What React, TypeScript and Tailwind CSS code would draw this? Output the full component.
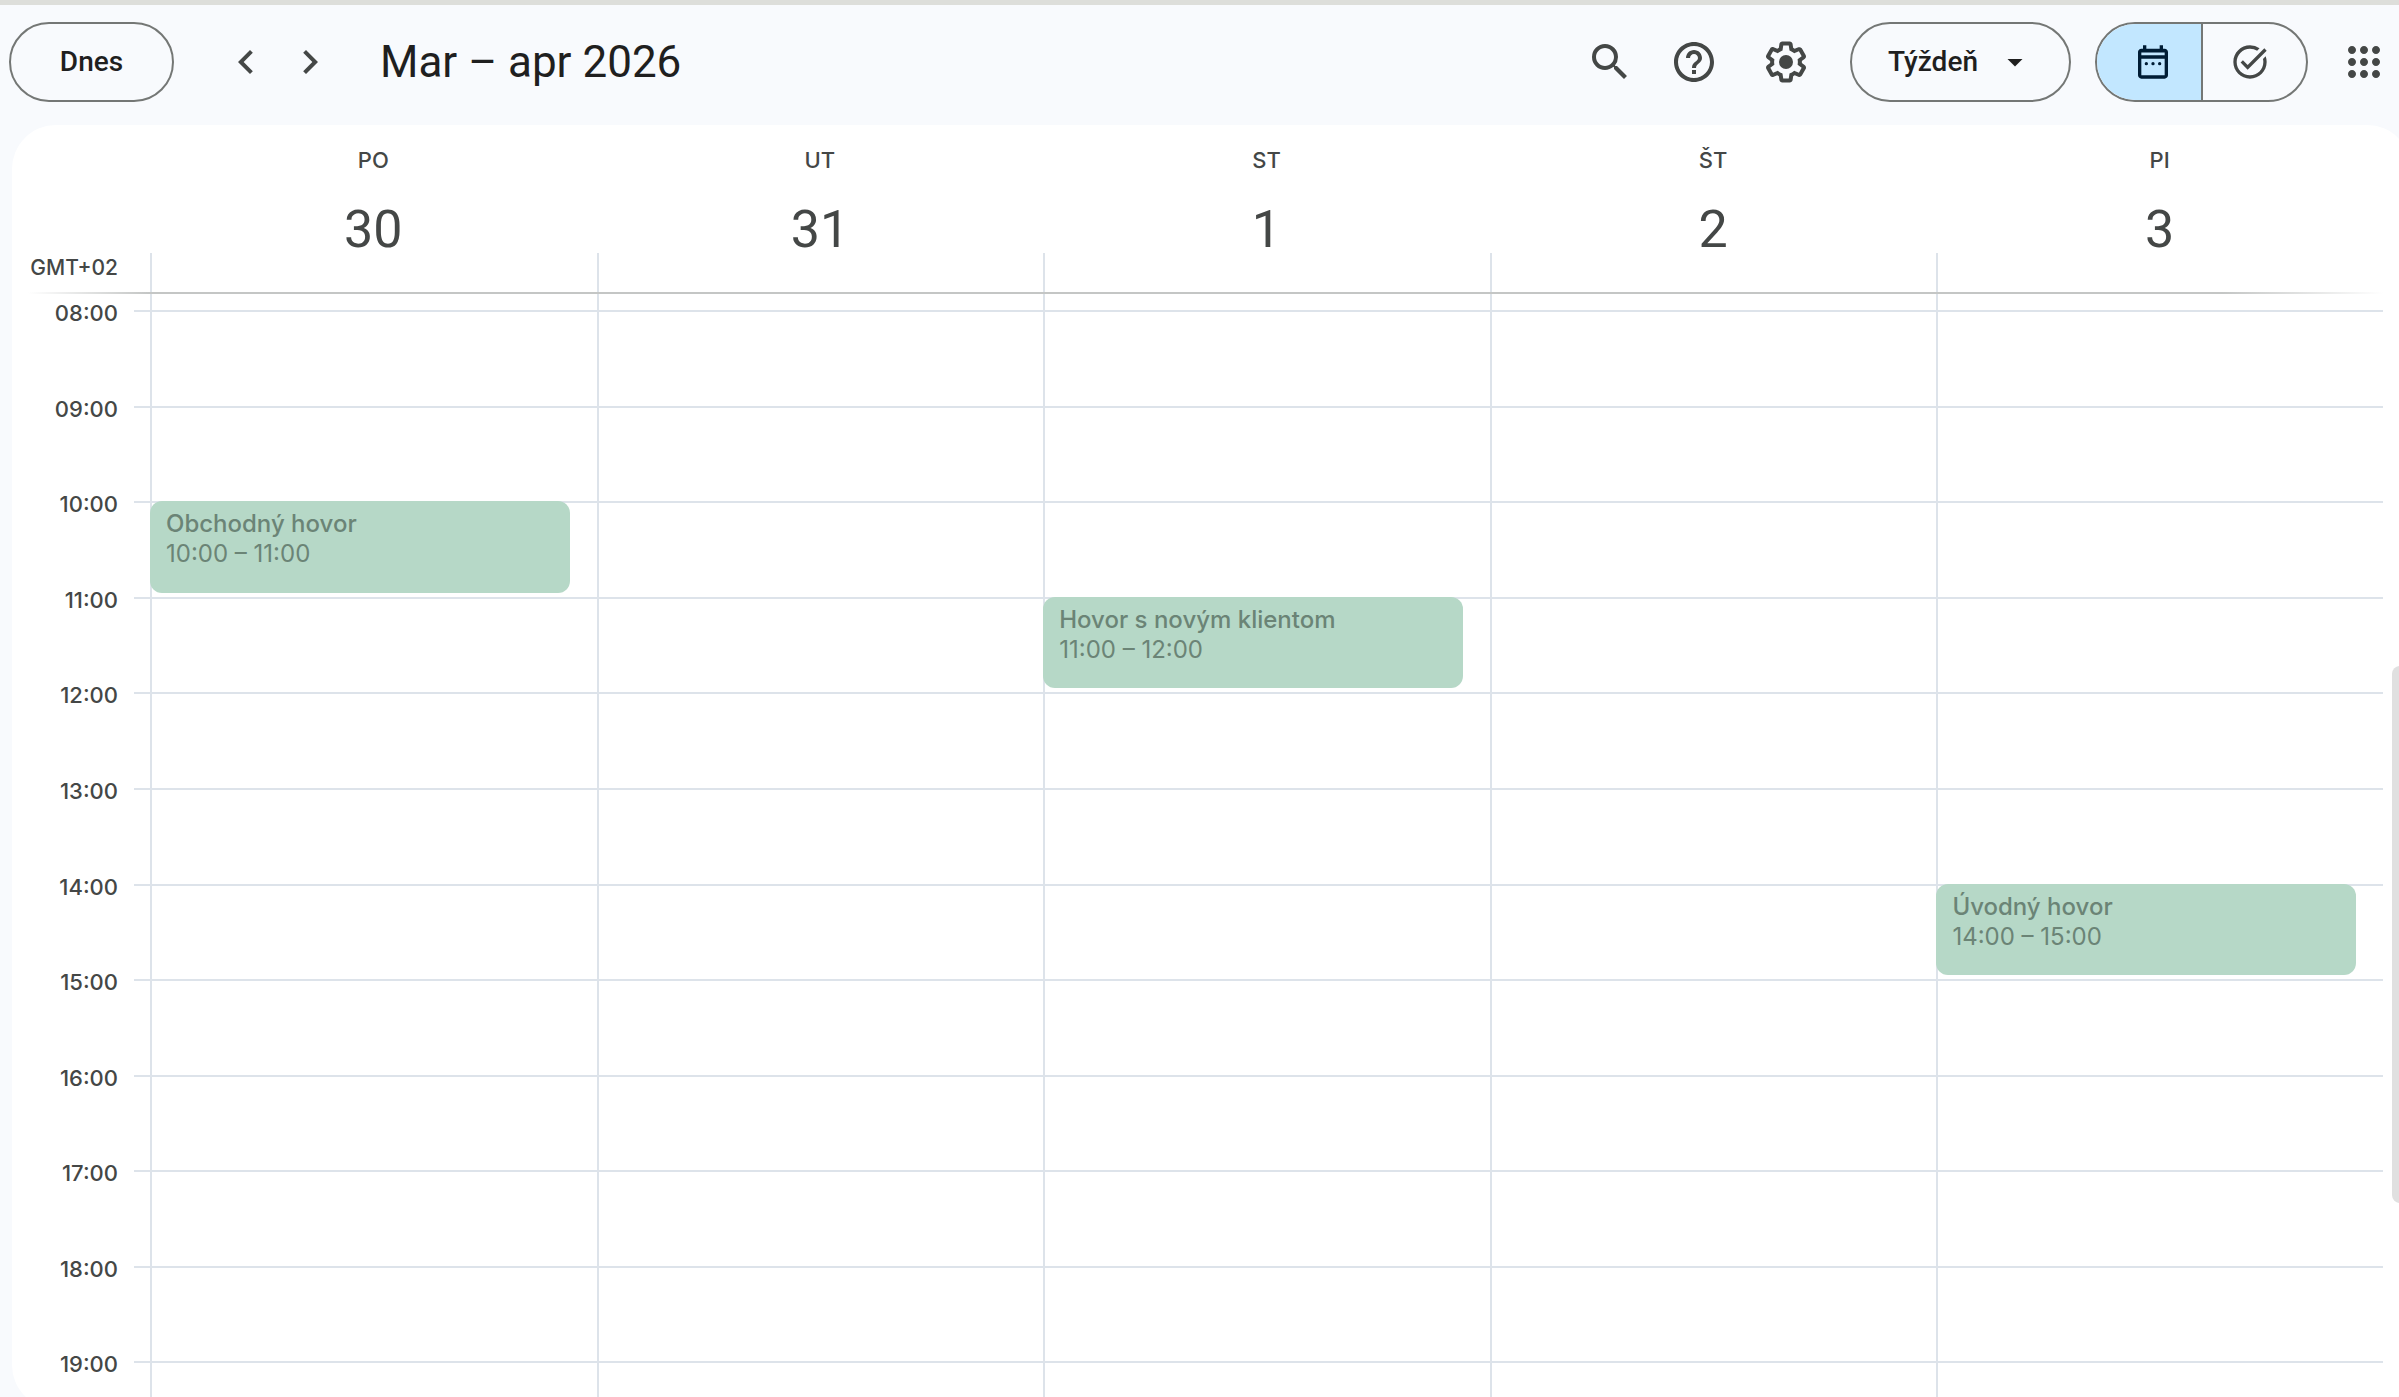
import React from 'react';

interface CalendarEvent {
  title: string;
  start: number;
  time: string;
}

interface Day {
  name: string;
  date: number;
  events: CalendarEvent[];
}

const HOURS = [8, 9, 10, 11, 12, 13, 14, 15, 16, 17, 18, 19];

const DAYS: Day[] = [
  {
    name: 'PO',
    date: 30,
    events: [{ title: 'Obchodný hovor', start: 10, time: '10:00 – 11:00' }],
  },
  { name: 'UT', date: 31, events: [] },
  {
    name: 'ST',
    date: 1,
    events: [{ title: 'Hovor s novým klientom', start: 11, time: '11:00 – 12:00' }],
  },
  { name: 'ŠT', date: 2, events: [] },
  {
    name: 'PI',
    date: 3,
    events: [{ title: 'Úvodný hovor', start: 14, time: '14:00 – 15:00' }],
  },
];

const ICONS = {
  prev: 'M15.41 7.41 14 6l-6 6 6 6 1.41-1.41L10.83 12z',
  next: 'M10 6 8.59 7.41 13.17 12l-4.58 4.59L10 18l6-6z',
  search:
    'M15.5 14h-.79l-.28-.27A6.471 6.471 0 0 0 16 9.5 6.5 6.5 0 1 0 9.5 16c1.61 0 3.09-.59 4.23-1.57l.27.28v.79l5 4.99L20.49 19l-4.99-5zm-6 0C7.01 14 5 11.99 5 9.5S7.01 5 9.5 5 14 7.01 14 9.5 11.99 14 9.5 14z',
  help:
    'M11 18h2v-2h-2v2zm1-16C6.48 2 2 6.48 2 12s4.48 10 10 10 10-4.48 10-10S17.52 2 12 2zm0 18c-4.41 0-8-3.59-8-8s3.59-8 8-8 8 3.59 8 8-3.59 8-8 8zm0-14c-2.21 0-4 1.79-4 4h2c0-1.1.9-2 2-2s2 .9 2 2c0 2-3 1.75-3 5h2c0-2.25 3-2.5 3-5 0-2.21-1.79-4-4-4z',
  settings:
    'M13.85 22.25h-3.7c-.74 0-1.36-.54-1.45-1.27l-.27-1.89c-.27-.14-.53-.29-.79-.46l-1.8.72c-.7.26-1.47-.03-1.81-.65L2.2 15.53c-.35-.66-.2-1.44.36-1.88l1.53-1.19c-.01-.15-.02-.3-.02-.46 0-.15.01-.31.02-.46l-1.52-1.19c-.59-.45-.74-1.26-.37-1.88l1.85-3.19c.34-.62 1.11-.9 1.79-.63l1.81.73c.26-.17.52-.32.78-.46l.27-1.91c.09-.7.71-1.25 1.44-1.25h3.7c.74 0 1.36.54 1.45 1.27l.27 1.89c.27.14.53.29.79.46l1.8-.72c.71-.26 1.48.03 1.82.65l1.84 3.18c.36.66.2 1.44-.36 1.88l-1.52 1.19c.01.15.02.3.02.46s-.01.31-.02.46l1.52 1.19c.56.45.72 1.23.37 1.86l-1.86 3.22c-.34.62-1.11.9-1.8.63l-1.8-.72c-.26.17-.52.32-.78.46l-.27 1.91c-.1.68-.72 1.22-1.46 1.22zm-3.23-2h2.76l.37-2.55.53-.22c.44-.18.88-.44 1.34-.78l.45-.34 2.38.96 1.38-2.4-2.03-1.58.07-.56c.03-.26.06-.51.06-.78s-.03-.53-.06-.78l-.07-.56 2.03-1.58-1.39-2.4-2.39.96-.45-.35c-.42-.32-.87-.58-1.33-.77l-.52-.22-.37-2.55h-2.76l-.37 2.55-.53.21c-.44.19-.88.44-1.34.79l-.45.33-2.38-.95-1.39 2.39 2.03 1.58-.07.56a7 7 0 0 0-.06.79c0 .26.02.53.06.78l.07.56-2.03 1.58 1.38 2.4 2.39-.96.45.35c.43.33.86.58 1.33.77l.53.22.38 2.55z M12 8.5a3.5 3.5 0 1 0 0 7 3.5 3.5 0 0 0 0-7z',
  calendar:
    'M19 4h-1V2h-2v2H8V2H6v2H5c-1.1 0-2 .9-2 2v14c0 1.1.9 2 2 2h14c1.1 0 2-.9 2-2V6c0-1.1-.9-2-2-2zm0 16H5V10h14v10zm0-12H5V6.3h14V8z M8 12a1 1 0 1 0 0 2 1 1 0 0 0 0-2z M12 12a1 1 0 1 0 0 2 1 1 0 0 0 0-2z M16 12a1 1 0 1 0 0 2 1 1 0 0 0 0-2z',
  tasks:
    'M22 5.18 10.59 16.6l-4.24-4.24 1.41-1.41 2.83 2.83 10-10L22 5.18zM19.79 10.22c.13.57.21 1.17.21 1.78 0 4.42-3.58 8-8 8s-8-3.58-8-8 3.58-8 8-8c1.58 0 3.04.46 4.28 1.25l1.44-1.44A9.9 9.9 0 0 0 12 2C6.48 2 2 6.48 2 12s4.48 10 10 10 10-4.48 10-10c0-1.19-.22-2.33-.6-3.39l-1.61 1.61z',
  apps:
    'M6 8c1.1 0 2-.9 2-2s-.9-2-2-2-2 .9-2 2 .9 2 2 2zm6 12c1.1 0 2-.9 2-2s-.9-2-2-2-2 .9-2 2 .9 2 2 2zm-6 0c1.1 0 2-.9 2-2s-.9-2-2-2-2 .9-2 2 .9 2 2 2zm0-6c1.1 0 2-.9 2-2s-.9-2-2-2-2 .9-2 2 .9 2 2 2zm6 0c1.1 0 2-.9 2-2s-.9-2-2-2-2 .9-2 2 .9 2 2 2zm4-8c0 1.1.9 2 2 2s2-.9 2-2-.9-2-2-2-2 .9-2 2zm-4 2c1.1 0 2-.9 2-2s-.9-2-2-2-2 .9-2 2 .9 2 2 2zm6 6c1.1 0 2-.9 2-2s-.9-2-2-2-2 .9-2 2 .9 2 2 2zm0 6c1.1 0 2-.9 2-2s-.9-2-2-2-2 .9-2 2 .9 2 2 2z',
  dropdown: 'm7 10 5 5 5-5z',
};

function Icon({ name, className }: { name: keyof typeof ICONS; className: string }) {
  return (
    <svg viewBox="0 0 24 24" fill="currentColor" className={className} aria-hidden="true">
      <path d={ICONS[name]} />
    </svg>
  );
}

function IconButton({
  name,
  label,
  className = '',
}: {
  name: keyof typeof ICONS;
  label: string;
  className?: string;
}) {
  return (
    <button type="button" aria-label={label} className={`shrink-0 text-[#444746] ${className}`}>
      <Icon name={name} className="size-12" />
    </button>
  );
}

function TopBar() {
  return (
    <header className="mb-[7px] flex h-[113px] shrink-0 items-center pl-[9px] pr-[11px] font-[Roboto,sans-serif]">
      <button
        type="button"
        className="h-20 w-[165px] shrink-0 rounded-full border-2 border-[#747775] text-[28px] font-medium text-[#1f1f1f]"
      >
        Dnes
      </button>
      <div className="ml-12 flex gap-4">
        <IconButton name="prev" label="Predchádzajúci týždeň" />
        <IconButton name="next" label="Nasledujúci týždeň" />
      </div>
      <h1 className="ml-[46px] whitespace-nowrap text-[44px] text-[#1f1f1f]">Mar – apr 2026</h1>

      <div className="ml-auto flex items-center">
        <IconButton name="search" label="Hľadať" className="mr-9" />
        <IconButton name="help" label="Pomocník" className="mr-11" />
        <IconButton name="settings" label="Nastavenia" className="mr-10" />

        <div className="relative mr-6 shrink-0">
          <select
            aria-label="Zobrazenie"
            defaultValue="week"
            className="h-20 w-[221px] appearance-none rounded-full border-2 border-[#747775] bg-transparent pl-9 text-[28px] font-medium text-[#1f1f1f]"
          >
            <option value="day">Deň</option>
            <option value="week">Týždeň</option>
            <option value="month">Mesiac</option>
          </select>
          <Icon
            name="dropdown"
            className="pointer-events-none absolute right-[38px] top-[22px] size-9 text-[#1f1f1f]"
          />
        </div>

        <div className="mr-8 flex h-20 w-[213px] shrink-0 overflow-hidden rounded-full border-2 border-[#747775]">
          <button
            type="button"
            aria-label="Kalendár"
            aria-pressed="true"
            className="flex flex-1 items-center justify-center border-r-2 border-[#747775] bg-[#c2e7ff] pl-2 text-[#001d35]"
          >
            <Icon name="calendar" className="size-10" />
          </button>
          <button
            type="button"
            aria-label="Úlohy"
            aria-pressed="false"
            className="flex flex-1 items-center justify-center pr-2 text-[#444746]"
          >
            <Icon name="tasks" className="size-10" />
          </button>
        </div>

        <IconButton name="apps" label="Aplikácie Google" />
      </div>
    </header>
  );
}

function WeekHeader() {
  return (
    <div className="flex pr-7 text-[#444746]">
      <div className="flex w-[138px] shrink-0 items-end justify-end pb-[7px] pr-8 text-[21px] font-medium leading-[34px]">
        GMT+02
      </div>
      {DAYS.map((day) => (
        <div key={day.name} className="flex flex-1 flex-col pt-5 text-center">
          <div className="text-[22px] font-medium leading-[30px]">{day.name}</div>
          <div className="mt-8 font-[Roboto,sans-serif] text-[52px] leading-[46px]">{day.date}</div>
          <div className="h-[39px] border-l-2 border-[#dde3ea]" />
        </div>
      ))}
    </div>
  );
}

function HeaderDivider() {
  return (
    <div className="ml-4 mr-7 flex h-0.5">
      <div className="w-[120px] bg-linear-to-r from-transparent to-[#c4c6c5]" />
      <div className="flex-1 bg-[#c4c6c5]" />
      <div className="w-[160px] bg-linear-to-l from-transparent to-[#c4c6c5]" />
    </div>
  );
}

function EventCard({ event }: { event: CalendarEvent }) {
  return (
    <button
      type="button"
      className="absolute -left-0.5 -top-0.5 bottom-1 right-[27px] flex flex-col rounded-xl bg-[#b6d8c7] px-4 pt-2 text-left text-[24px] leading-[30px] text-[#6b8476]"
    >
      <span className="font-medium">{event.title}</span>
      <span>{event.time}</span>
    </button>
  );
}

function WeekGrid() {
  return (
    <div className="flex pr-7">
      {/* Hour labels */}
      <div className="w-[138px] shrink-0 pt-4">
        <div className="grid h-[1147px] grid-rows-12">
          {HOURS.map((hour) => (
            <div key={hour} className="flex justify-end">
              <span className="-mt-3 mr-4 text-[22px] font-medium leading-[30px] text-[#444746]">
                {String(hour).padStart(2, '0')}:00
              </span>
              <span className="w-4 border-t-2 border-[#dde3ea]" />
            </div>
          ))}
        </div>
      </div>

      {/* Day columns */}
      {DAYS.map((day) => (
        <div key={day.name} className="flex-1 border-l-2 border-[#dde3ea] pt-4">
          <div className="grid h-[1147px] grid-rows-12">
            {HOURS.map((hour) => (
              <div key={hour} className="relative border-t-2 border-[#dde3ea]">
                {day.events
                  .filter((event) => event.start === hour)
                  .map((event) => (
                    <EventCard key={event.title} event={event} />
                  ))}
              </div>
            ))}
          </div>
        </div>
      ))}
    </div>
  );
}

export default function App() {
  return (
    <div className="flex h-screen flex-col overflow-hidden border-t-5 border-[#dddeda] bg-[#f8fafd] font-[Inter,sans-serif]">
      <TopBar />
      <main className="relative -mb-3 -mr-3 ml-3 min-h-0 flex-1 overflow-hidden rounded-[44px] bg-white">
        <WeekHeader />
        <HeaderDivider />
        <WeekGrid />
        {/* Scrollbar thumb */}
        <div className="absolute right-0 top-[541px] h-[537px] w-[19px] rounded-lg bg-[#e0e0e0]" />
      </main>
    </div>
  );
}
